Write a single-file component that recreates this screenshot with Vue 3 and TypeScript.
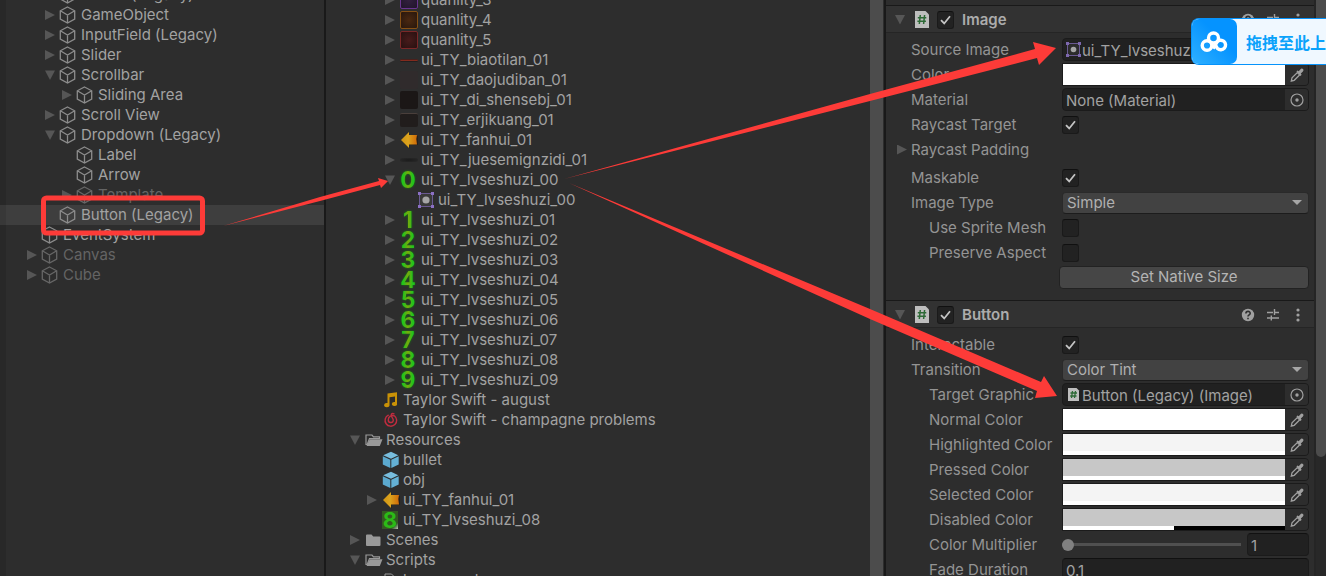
<script setup lang="ts">
import { ref } from 'vue'

type Fold = 'open' | 'closed' | 'none'

interface SceneNode {
  name: string
  level: number
  fold: Fold
  inactive?: boolean
  selected?: boolean
}

interface AssetNode {
  name: string
  level: number
  fold: Fold
  icon: string
  digit?: string
}

interface Field {
  id: string
  label: string
  kind: 'object' | 'color' | 'check' | 'fold' | 'select' | 'button' | 'slider' | 'text'
  sub?: boolean
  gap?: boolean
  value?: string
  checked?: boolean
  icon?: 'sprite' | 'script'
  color?: string
  alpha?: number
}

interface Section {
  title: string
  fields: Field[]
}

const scene: SceneNode[] = [
  { name: 'Button (Legacy)', level: 1, fold: 'none' },
  { name: 'GameObject', level: 1, fold: 'closed' },
  { name: 'InputField (Legacy)', level: 1, fold: 'closed' },
  { name: 'Slider', level: 1, fold: 'closed' },
  { name: 'Scrollbar', level: 1, fold: 'open' },
  { name: 'Sliding Area', level: 2, fold: 'closed' },
  { name: 'Scroll View', level: 1, fold: 'closed' },
  { name: 'Dropdown (Legacy)', level: 1, fold: 'open' },
  { name: 'Label', level: 2, fold: 'none' },
  { name: 'Arrow', level: 2, fold: 'none' },
  { name: 'Template', level: 2, fold: 'closed', inactive: true },
  { name: 'Button (Legacy)', level: 1, fold: 'none', selected: true },
  { name: 'EventSystem', level: 0, fold: 'none' },
  { name: 'Canvas', level: 0, fold: 'closed', inactive: true },
  { name: 'Cube', level: 0, fold: 'closed', inactive: true },
]

const digits: AssetNode[] = Array.from({ length: 9 }, (_, i) => ({
  name: `ui_TY_lvseshuzi_0${i + 1}`,
  level: 2,
  fold: 'closed',
  icon: 'digit',
  digit: String(i + 1),
}))

const assets: AssetNode[] = [
  { name: 'quanlity_3', level: 2, fold: 'closed', icon: 'purple' },
  { name: 'quanlity_4', level: 2, fold: 'closed', icon: 'orange' },
  { name: 'quanlity_5', level: 2, fold: 'closed', icon: 'red' },
  { name: 'ui_TY_biaotilan_01', level: 2, fold: 'closed', icon: 'line' },
  { name: 'ui_TY_daojudiban_01', level: 2, fold: 'closed', icon: 'faint' },
  { name: 'ui_TY_di_shensebj_01', level: 2, fold: 'closed', icon: 'dark' },
  { name: 'ui_TY_erjikuang_01', level: 2, fold: 'closed', icon: 'frame' },
  { name: 'ui_TY_fanhui_01', level: 2, fold: 'closed', icon: 'back' },
  { name: 'ui_TY_juesemignzidi_01', level: 2, fold: 'closed', icon: 'smear' },
  { name: 'ui_TY_lvseshuzi_00', level: 2, fold: 'open', icon: 'digit', digit: '0' },
  { name: 'ui_TY_lvseshuzi_00', level: 3, fold: 'none', icon: 'sprite' },
  ...digits,
  { name: 'Taylor Swift - august', level: 1, fold: 'none', icon: 'music' },
  { name: 'Taylor Swift - champagne problems', level: 1, fold: 'none', icon: 'netease' },
  { name: 'Resources', level: 0, fold: 'open', icon: 'folder-open' },
  { name: 'bullet', level: 1, fold: 'none', icon: 'prefab' },
  { name: 'obj', level: 1, fold: 'none', icon: 'prefab' },
  { name: 'ui_TY_fanhui_01', level: 1, fold: 'closed', icon: 'back' },
  { name: 'ui_TY_lvseshuzi_08', level: 1, fold: 'none', icon: 'thumb', digit: '8' },
  { name: 'Scenes', level: 0, fold: 'closed', icon: 'folder' },
  { name: 'Scripts', level: 0, fold: 'open', icon: 'folder-open' },
  { name: 'bgmsound', level: 1, fold: 'none', icon: 'file' },
]

const sections: Section[] = [
  {
    title: 'Image',
    fields: [
      { id: 'source', label: 'Source Image', kind: 'object', value: 'ui_TY_lvseshuzi_00', icon: 'sprite' },
      { id: 'color', label: 'Color', kind: 'color', color: '#ffffff', alpha: 100 },
      { id: 'material', label: 'Material', kind: 'object', value: 'None (Material)' },
      { id: 'raycast', label: 'Raycast Target', kind: 'check', checked: true },
      { id: 'padding', label: 'Raycast Padding', kind: 'fold' },
      { id: 'maskable', label: 'Maskable', kind: 'check', checked: true, gap: true },
      { id: 'type', label: 'Image Type', kind: 'select', value: 'Simple' },
      { id: 'mesh', label: 'Use Sprite Mesh', kind: 'check', sub: true },
      { id: 'aspect', label: 'Preserve Aspect', kind: 'check', sub: true },
      { id: 'native', label: '', kind: 'button', value: 'Set Native Size' },
    ],
  },
  {
    title: 'Button',
    fields: [
      { id: 'interactable', label: 'Interactable', kind: 'check', checked: true },
      { id: 'transition', label: 'Transition', kind: 'select', value: 'Color Tint' },
      { id: 'target', label: 'Target Graphic', kind: 'object', sub: true, value: 'Button (Legacy) (Image)', icon: 'script' },
      { id: 'normal', label: 'Normal Color', kind: 'color', sub: true, color: '#ffffff', alpha: 100 },
      { id: 'highlighted', label: 'Highlighted Color', kind: 'color', sub: true, color: '#f4f4f4', alpha: 100 },
      { id: 'pressed', label: 'Pressed Color', kind: 'color', sub: true, color: '#c7c7c7', alpha: 100 },
      { id: 'selected', label: 'Selected Color', kind: 'color', sub: true, color: '#f4f4f4', alpha: 100 },
      { id: 'disabled', label: 'Disabled Color', kind: 'color', sub: true, color: '#c7c7c7', alpha: 50 },
      { id: 'multiplier', label: 'Color Multiplier', kind: 'slider', sub: true },
      { id: 'fade', label: 'Fade Duration', kind: 'text', sub: true, value: '0.1' },
    ],
  },
]

const multiplier = ref('1')
</script>

<template>
  <main class="editor">
    <section class="hierarchy" aria-label="Hierarchy">
      <ul class="tree">
        <li
          v-for="(node, i) in scene"
          :key="i"
          class="row"
          :class="['level-' + node.level, { inactive: node.inactive, selected: node.selected }]"
        >
          <button v-if="node.fold !== 'none'" class="fold" :class="node.fold" :aria-label="'Toggle ' + node.name"></button>
          <span v-else class="fold-space"></span>
          <svg class="cube" viewBox="0 0 16 18" aria-hidden="true">
            <path d="M8 1 L15.2 4.8 V13 L8 17 L.8 13 V4.8 Z M.8 4.8 L8 9 L15.2 4.8 M8 9 V17" />
          </svg>
          <span class="name">{{ node.name }}</span>
        </li>
      </ul>
    </section>

    <section class="project" aria-label="Project">
      <ul class="tree">
        <li v-for="(node, i) in assets" :key="i" class="row" :class="'level-' + node.level">
          <button v-if="node.fold !== 'none'" class="fold" :class="node.fold" :aria-label="'Toggle ' + node.name"></button>
          <span v-else class="fold-space"></span>
          <span class="icon" :class="'i-' + node.icon" aria-hidden="true">
            <span v-if="node.digit" class="digit">{{ node.digit }}</span>
            <span v-else-if="['purple', 'orange', 'red', 'line', 'faint', 'dark', 'frame', 'smear'].includes(node.icon)" class="thumb"></span>
            <svg v-else-if="node.icon === 'back'" width="18" height="18" viewBox="0 0 18 18">
              <defs>
                <linearGradient id="backFill" x1="0" x2="1">
                  <stop offset="0" stop-color="#cf9414" />
                  <stop offset=".45" stop-color="#dca41e" />
                  <stop offset="1" stop-color="#cf6a08" />
                </linearGradient>
              </defs>
              <path d="M2 10 L9.500 2.500 V5 H18 V14 H9.500 V17.600 Z" fill="#1c1712" opacity=".6" />
              <path d="M1 9 L9 1 V4 H17 L16.300 8 L17 13.400 H9 V17 Z" fill="url(#backFill)" />
            </svg>
            <svg v-else-if="node.icon === 'sprite'" width="18" height="18" viewBox="0 0 18 18">
              <rect x="2.500" y="2.500" width="13" height="13" fill="#3a3a3a" stroke="#6a5a92" />
              <circle cx="9" cy="9" r="3.600" fill="#a6a6a6" />
              <path d="M1 1h3v3H1z M14 1h3v3h-3z M1 14h3v3H1z M14 14h3v3h-3z" fill="#8b70c4" />
            </svg>
            <svg v-else-if="node.icon === 'music'" width="18" height="18" viewBox="0 0 18 18">
              <path d="M5.500 2.500 L15 1.300 V12.500 A2.600 2 0 1 1 13 11 V5.500 L7.500 6.200 V13.800 A2.700 2.100 0 1 1 5.500 12 Z" fill="#c99207" />
            </svg>
            <svg v-else-if="node.icon === 'netease'" width="18" height="18" viewBox="0 0 18 18">
              <path d="M6.300 4.200 A5.800 5.800 0 1 0 12.400 4.800 C9.500 3.600 6.300 5.700 6.300 8.800 A2.500 2.500 0 0 0 11.300 9.300 C11.300 7 9.300 6.300 9.200 4.300 C9.100 2.800 10.300 2 12 2.800" fill="none" stroke="#c22c3f" stroke-width="1.400" stroke-linecap="round" />
            </svg>
            <svg v-else-if="node.icon === 'folder-open'" width="18" height="16" viewBox="0 0 18 16">
              <path d="M1 13 V3 H7 L8.500 4.800 H14.500 V6.500 H4.500 L2 13" fill="none" stroke="#999" stroke-width="1.200" />
              <path d="M4.800 7.200 H17.500 L14.800 14 H1.500 Z" fill="#999" />
            </svg>
            <svg v-else-if="node.icon === 'folder'" width="18" height="16" viewBox="0 0 18 16">
              <path d="M1 3.500 Q1 2.500 2 2.500 H6.500 L8.200 4.500 H14.500 Q15.500 4.500 15.500 5.500 V13 Q15.500 14 14.500 14 H2 Q1 14 1 13 Z" fill="#999" />
            </svg>
            <svg v-else-if="node.icon === 'prefab'" width="18" height="18" viewBox="0 0 18 18">
              <path d="M9 .8 L16.300 4.200 L9 7.800 L1.200 4.200 Z" fill="#78bddd" />
              <path d="M.8 5.200 L8.300 8.700 V17 L.8 13.500 Z" fill="#5ba9cf" />
              <path d="M16.700 5.200 L9.300 8.700 V17 L16.700 13.500 Z" fill="#64b1d5" />
            </svg>
            <svg v-else width="18" height="18" viewBox="0 0 18 18">
              <path d="M3 3 H9.500 L13 6.500 V17 H3 Z" fill="none" stroke="#999" />
            </svg>
          </span>
          <span class="name">{{ node.name }}</span>
        </li>
      </ul>
      <div class="bar-full"></div>
    </section>

    <section class="inspector" aria-label="Inspector">
      <div class="components">
        <section v-for="section in sections" :key="section.title" class="component">
          <header class="component-head">
            <button class="fold open" :aria-label="'Toggle ' + section.title"></button>
            <svg class="script" viewBox="0 0 16 17" aria-hidden="true">
              <path d="M1 0 H11.500 L15 3.500 V17 H1 Z" fill="#bebebe" />
              <path d="M6.300 4 L5.300 13 M10.600 4 L9.600 13 M3.800 6.700 H12.300 M3.400 10.300 H11.900" fill="none" stroke="#2d6a36" stroke-width="1.500" />
            </svg>
            <span class="check">
              <input type="checkbox" checked :aria-label="section.title + ' enabled'" />
              <svg viewBox="0 0 17 17" aria-hidden="true"><path d="M4 8.700 L7.200 12 L13 4.800" /></svg>
            </span>
            <h2>{{ section.title }}</h2>
            <button class="tool" :aria-label="section.title + ' help'">
              <svg viewBox="0 0 14 14">
                <circle cx="7" cy="7" r="6.200" fill="#a0a0a0" />
                <path d="M4.900 5.500 C4.900 2.600 9.200 2.800 9.200 5.300 C9.200 6.900 7 6.700 7 8.500 M7 9.800 V11.300" fill="none" stroke="#2f2f2f" stroke-width="1.600" />
              </svg>
            </button>
            <button class="tool" :aria-label="section.title + ' presets'">
              <svg viewBox="0 0 14 14">
                <path d="M1 4.500 H7 M8.500 4.500 H13 M8.500 1 V7 M1 10 H4.500 M6 10 H13 M5.300 7.500 V12.500" fill="none" stroke="#a0a0a0" stroke-width="1.400" />
              </svg>
            </button>
            <button class="tool" :aria-label="section.title + ' menu'">
              <svg viewBox="0 0 14 14" fill="#a0a0a0">
                <circle cx="7" cy="2" r="1.600" /><circle cx="7" cy="7" r="1.600" /><circle cx="7" cy="12" r="1.600" />
              </svg>
            </button>
          </header>

          <div class="fields">
            <div v-for="f in section.fields" :key="f.id" class="field" :class="{ sub: f.sub, gap: f.gap }">
              <button v-if="f.kind === 'fold'" class="label fold-label"><i class="fold closed"></i>{{ f.label }}</button>
              <label v-else class="label" :for="f.id">{{ f.label }}</label>

              <div v-if="f.kind === 'object'" class="box object">
                <svg v-if="f.icon === 'sprite'" class="mini" viewBox="0 0 15 15" aria-hidden="true">
                  <rect x="1.500" y="1.500" width="12" height="12" fill="#2c2c2c" stroke="#6a5a92" />
                  <circle cx="7.500" cy="7.500" r="2.800" fill="#a6a6a6" />
                  <path d="M0 0h3v3H0z M12 0h3v3h-3z M0 12h3v3H0z M12 12h3v3h-3z" fill="#7d68ae" />
                </svg>
                <svg v-if="f.icon === 'script'" class="mini" viewBox="0 0 15 15" aria-hidden="true">
                  <path d="M2 1 H10.500 L13 3.500 V14 H2 Z" fill="#bebebe" />
                  <path d="M6.500 4 L5.500 11 M9.500 4 L8.500 11 M4.500 6 H11 M4.200 9 H10.500" fill="none" stroke="#2d6a36" stroke-width="1.300" />
                </svg>
                <input :id="f.id" type="text" readonly :value="f.value" />
                <button class="end" :aria-label="'Pick ' + f.label">
                  <svg viewBox="0 0 14 14"><circle cx="7" cy="7" r="6" fill="none" stroke="#a0a0a0" stroke-width="1.200" /><circle cx="7" cy="7" r="1.700" fill="#a0a0a0" /></svg>
                </button>
              </div>

              <div v-else-if="f.kind === 'color'" class="box color">
                <button :id="f.id" class="swatch" :style="{ backgroundColor: f.color }">
                  <span class="alpha"><span :style="{ width: f.alpha + '%' }"></span></span>
                </button>
                <button class="end" :aria-label="'Sample ' + f.label">
                  <svg viewBox="0 0 14 14">
                    <path d="M7.300 4.600 L9.600 6.900 L4.200 12.300 L1.300 13 L2 9.900 Z" fill="none" stroke="#a0a0a0" stroke-width="1.300" />
                    <path d="M6.400 3.200 L7.600 2.400 L8.700 3.200 L11 .8 Q12.200 .2 13.200 1.300 Q14 2.400 12.900 3.500 L10.800 5.600 L11.600 6.700 L10.600 7.900 Z" fill="#a0a0a0" />
                  </svg>
                </button>
              </div>

              <span v-else-if="f.kind === 'check'" class="check">
                <input :id="f.id" type="checkbox" :checked="f.checked" />
                <svg viewBox="0 0 17 17" aria-hidden="true"><path d="M4 8.700 L7.200 12 L13 4.800" /></svg>
              </span>

              <div v-else-if="f.kind === 'select'" class="select">
                <select :id="f.id"><option>{{ f.value }}</option></select>
                <i class="caret"></i>
              </div>

              <button v-else-if="f.kind === 'button'" :id="f.id" class="action">{{ f.value }}</button>

              <div v-else-if="f.kind === 'slider'" class="slider">
                <input :id="f.id" v-model="multiplier" type="range" min="1" max="5" />
                <input v-model="multiplier" class="box number" type="text" aria-label="Color Multiplier value" />
              </div>

              <input v-else-if="f.kind === 'text'" :id="f.id" class="box number" type="text" :value="f.value" />
            </div>
          </div>
        </section>
      </div>
      <div class="scroll"><div class="thumb-bar"></div></div>
    </section>

    <svg class="notes" aria-hidden="true">
      <rect x="43.500" y="198" width="159" height="35" rx="3" fill="none" stroke="#fd3b38" stroke-width="5" />
      <g fill="#fd3b38">
        <path d="M223 226 L320 197 L379 181 L378 178 L388 181 L381 188 L380 185 L320 201 Z" />
        <path d="M564 179 L870 94 L1035 49 L1033 42 L1056 48 L1039 65 L1037 58 L870 101 Z" />
        <path d="M569 183 L870 309 L1041 382 L1044 376 L1057 396 L1035 398 L1037 391 L870 319 Z" />
      </g>
    </svg>

    <button class="upload">
      <span class="upload-icon">
        <svg viewBox="0 0 28 22" aria-hidden="true">
          <g fill="none" stroke="#fff" stroke-width="3.400">
            <circle cx="13.500" cy="7" r="5" />
            <circle cx="7" cy="14.500" r="4.800" />
            <path d="M14 11.500 L17.500 17.500 A4.800 4.800 0 1 0 17 11 L13 17.500" stroke-linejoin="round" />
          </g>
        </svg>
      </span>
      <span class="upload-text">拖拽至此上</span>
    </button>
  </main>
</template>

<style>
body {
  background: #2d2d2d;
}
</style>

<style scoped>
.editor {
  position: relative;
  display: grid;
  grid-template-columns: minmax(0, 326fr) minmax(0, 560fr) minmax(0, 440fr);
  height: 100vh;
  overflow: hidden;
  background: #2d2d2d;
  color: #a2a2a2;
  font-family: Inter, "Noto Sans CJK SC", sans-serif;
  font-size: 15px;
  font-optical-sizing: none;
  line-height: 20px;
}
button,
input,
select {
  margin: 0;
  padding: 0;
  border: 0;
  background: none;
  color: inherit;
  font: inherit;
  font-optical-sizing: none;
  box-sizing: border-box;
}
.tree {
  list-style: none;
  margin: 0;
  padding: 0;
}
.row {
  display: flex;
  align-items: center;
  height: 20px;
  white-space: nowrap;
}
.fold {
  flex: none;
  width: 10px;
  height: 10px;
  background: #565656;
}
.fold.closed {
  clip-path: polygon(0 0, 100% 50%, 0 100%);
}
.fold.open {
  clip-path: polygon(0 5%, 100% 5%, 50% 100%);
}
.fold-space {
  flex: none;
  width: 10px;
}
.hierarchy {
  overflow: hidden;
  border-right: 2px solid #191919;
  background: linear-gradient(to right, #282828 6px, #2d2d2d 6px);
}
.hierarchy .tree {
  margin-top: -15px;
}
.hierarchy .row {
  padding-left: 27px;
}
.hierarchy .level-1 {
  padding-left: 45px;
}
.hierarchy .level-2 {
  padding-left: 62px;
}
.cube {
  flex: none;
  width: 17px;
  height: 18px;
  margin: 0 5px 0 4px;
  fill: none;
  stroke: #8c8c8c;
  stroke-width: 1.3;
}
.inactive {
  color: #646464;
}
.inactive .cube {
  stroke: #666;
}
.selected {
  background: linear-gradient(to right, #383838 6px, #3e3e3e 6px);
}
.project {
  display: flex;
  justify-content: space-between;
  overflow: hidden;
  border-right: 2px solid #191919;
}
.project .tree {
  margin-top: -10px;
}
.project .row {
  padding-left: 24px;
}
.project .level-1 {
  padding-left: 41px;
}
.project .level-2 {
  padding-left: 59px;
}
.project .level-3 {
  padding-left: 76px;
}
.bar-full {
  width: 13px;
  margin-right: 1px;
  background: #4c4c4c;
}
.icon {
  flex: none;
  display: flex;
  align-items: center;
  width: 18px;
  height: 20px;
  margin: 0 3px 0 5px;
}
.icon svg {
  flex: none;
}
.digit {
  width: 16px;
  display: flex;
  justify-content: center;
  font-size: 23px;
  font-weight: 700;
  line-height: 20px;
  color: transparent;
  background: linear-gradient(to right, #22c41c 20%, #78a80c 50%, #22c41c 80%);
  background-clip: text;
  filter: drop-shadow(0 0 1px #14800f);
}
.i-thumb .digit {
  height: 18px;
  line-height: 18px;
  font-size: 22px;
  color: #2bbb16;
  background: linear-gradient(135deg, #345a22 80%, #c0c8bc);
  filter: none;
}
.thumb {
  width: 18px;
  height: 18px;
  border-radius: 2px;
  box-sizing: border-box;
}
.i-purple .thumb {
  border: 1px solid #6b3590;
  background: radial-gradient(#33203f, #21152b);
}
.i-orange .thumb {
  border: 1px solid #875014;
  background: radial-gradient(#4a2811, #28170d);
}
.i-red .thumb {
  border: 1px solid #7c2828;
  background: radial-gradient(#481b1b, #281111);
}
.i-line .thumb {
  height: 3px;
  border-top: 1px solid #4a201c;
  border-bottom: 1px solid #202020;
  background: #822b1e;
}
.i-faint .thumb {
  background: #302b2c;
}
.i-dark .thumb {
  background: #1b1716;
}
.i-frame .thumb {
  height: 14px;
  border-top: 1px solid #4a3f3b;
  background: #211d1c;
}
.i-smear .thumb {
  height: 4px;
  background: radial-gradient(#1b1b1b, #2a2a2a);
}
.inspector {
  display: flex;
  overflow: hidden;
}
.components {
  flex: 1;
  min-width: 0;
  padding-top: 5px;
}
.component-head {
  display: flex;
  align-items: center;
  height: 28px;
  padding: 1px 9px 0;
  box-sizing: border-box;
  border-top: 1px solid #191919;
  border-bottom: 1px solid #252525;
  background: #323232;
}
.script {
  flex: none;
  width: 16px;
  height: 17px;
  margin: 0 7px 0 9px;
}
h2 {
  flex: 1;
  margin: 0 0 0 8px;
  font-size: 15px;
  font-weight: 600;
  line-height: 20px;
  color: #acacac;
}
.tool {
  width: 14px;
  height: 14px;
  margin-left: 11px;
}
.tool svg,
.end svg {
  display: block;
  width: 14px;
  height: 14px;
}
.fields {
  padding: 4px 5px 10px 0;
}
.field {
  display: grid;
  grid-template-columns: minmax(0, 176fr) minmax(0, 247fr);
  align-items: center;
  height: 25px;
}
.field.gap {
  margin-top: 3px;
}
.label {
  padding-left: 25px;
  text-align: left;
  white-space: nowrap;
  color: #949494;
}
.sub .label {
  padding-left: 43px;
}
.fold-label {
  display: flex;
  align-items: center;
  gap: 4px;
  padding-left: 11px;
}
.check {
  display: grid;
  width: 17px;
  height: 18px;
}
.check input,
.check svg {
  grid-area: 1 / 1;
  width: 17px;
  height: 18px;
}
.check input {
  appearance: none;
  border: 1px solid #1a1a1a;
  border-top-color: #101010;
  border-radius: 3px;
  background: #222;
}
.check svg {
  pointer-events: none;
  visibility: hidden;
  fill: none;
  stroke: #c4c4c4;
  stroke-width: 1.8;
}
.check input:checked + svg {
  visibility: visible;
}
.box {
  display: flex;
  align-items: center;
  width: 100%;
  height: 23px;
  overflow: hidden;
  box-sizing: border-box;
  border: 1px solid #1b1b1b;
  border-radius: 4px;
  background: #212121;
}
.object input {
  flex: 1;
  min-width: 0;
  height: 21px;
  padding: 2px 0 0 3px;
}
.mini {
  flex: none;
  width: 15px;
  height: 15px;
  margin-left: 3px;
}
.mini + input {
  padding-left: 1px;
}
.end {
  flex: none;
  display: grid;
  place-items: center;
  width: 23px;
  height: 21px;
  background: #2d2d2d;
}
.color {
  border-radius: 0 4px 4px 0;
}
.swatch {
  flex: 1;
  display: flex;
  align-items: flex-end;
  height: 21px;
}
.alpha {
  display: block;
  width: 100%;
  height: 4px;
  background: #000;
}
.alpha span {
  display: block;
  height: 4px;
  background: #fff;
}
.select {
  display: grid;
  align-items: center;
}
.select select {
  grid-area: 1 / 1;
  appearance: none;
  width: 100%;
  height: 22px;
  padding: 0 4px 2px;
  border: 1px solid #2a2a2a;
  border-bottom-color: #1c1c1c;
  border-radius: 4px;
  background: #424242;
  color: #b0b0b0;
}
.caret {
  grid-area: 1 / 1;
  justify-self: end;
  width: 10px;
  height: 5px;
  margin-right: 7px;
  background: #a6a6a6;
  clip-path: polygon(0 0, 100% 0, 50% 100%);
  pointer-events: none;
}
.action {
  height: 23px;
  margin-left: -3px;
  padding-bottom: 2px;
  border: 1px solid #222;
  border-radius: 4px;
  background: #464646;
  color: #b4b4b4;
}
.slider {
  display: flex;
  align-items: center;
  gap: 6px;
}
.slider input[type='range'] {
  appearance: none;
  flex: 1;
  min-width: 0;
  height: 3px;
  background: #505050;
}
.slider input[type='range']::-webkit-slider-thumb {
  appearance: none;
  width: 12px;
  height: 12px;
  border-radius: 50%;
  background: #808080;
}
.number {
  padding: 2px 3px 0;
  border-top-color: #111;
}
.slider .number {
  flex: none;
  width: 62px;
}
.scroll {
  width: 10px;
  border-left: 2px solid #252525;
  background: #282828;
}
.thumb-bar {
  height: 457px;
  border-radius: 0 0 6px 6px;
  background: #4c4c4c;
}
.notes {
  position: absolute;
  inset: 0;
  width: 100%;
  height: 100%;
  pointer-events: none;
}
.upload {
  position: absolute;
  top: 18px;
  right: 0;
  display: flex;
  align-items: center;
  height: 47px;
  border: 1px solid #0693fb;
  border-right: 0;
  border-radius: 8px 0 0 8px;
  background: #f0f8ff;
}
.upload-icon {
  display: grid;
  place-items: center;
  width: 45px;
  height: 45px;
  border-radius: 7px;
  background: linear-gradient(45deg, #2fb0ff, #0593ff 60%);
}
.upload-icon svg {
  width: 28px;
  height: 22px;
}
.upload-text {
  margin-left: 9px;
  font-family: "Noto Sans CJK SC", sans-serif;
  font-size: 16px;
  font-weight: 700;
  color: #0aa2fb;
}
</style>
